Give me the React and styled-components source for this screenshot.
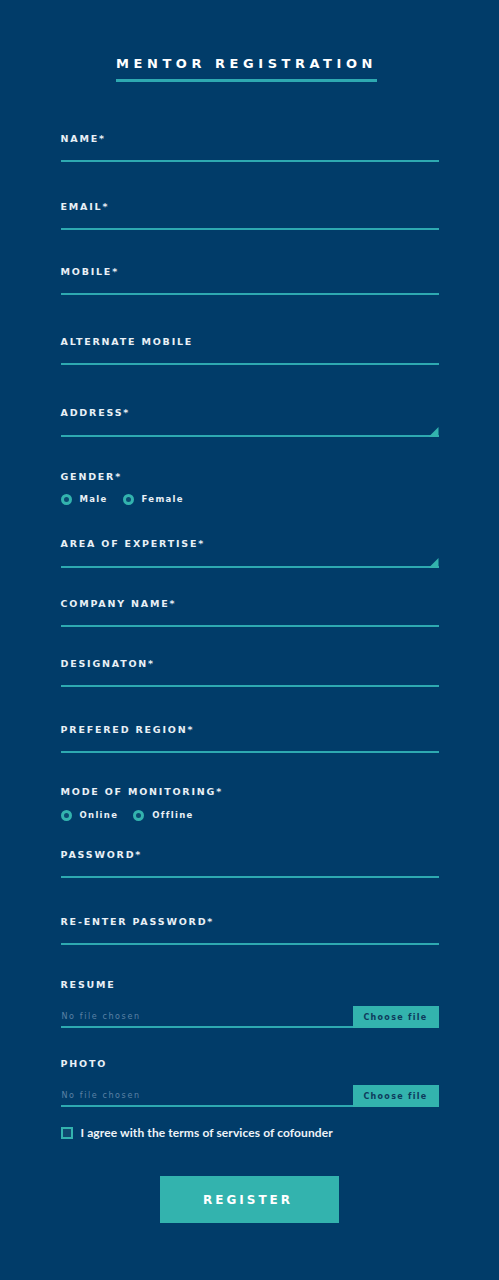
import React from "react";
import styled, { createGlobalStyle } from "styled-components";

const NAVY = "#013c69";
const TEAL = "#33b3ae";
const LINE = "#2ea9b1";

const GlobalStyle = createGlobalStyle`
  html, body {
    margin: 0;
    padding: 0;
    background: ${NAVY};
  }
  * {
    box-sizing: border-box;
  }
`;

// spacing above each block, taken from the layout
const fields = [
  { label: "NAME*", kind: "text", space: 0 },
  { label: "EMAIL*", kind: "text", space: 39 },
  { label: "MOBILE*", kind: "text", space: 36 },
  { label: "ALTERNATE MOBILE", kind: "text", space: 41 },
  { label: "ADDRESS*", kind: "area", space: 42 },
  { label: "GENDER*", kind: "radio", options: ["Male", "Female"], space: 34 },
  { label: "AREA OF EXPERTISE*", kind: "area", space: 33 },
  { label: "COMPANY NAME*", kind: "text", space: 30 },
  { label: "DESIGNATON*", kind: "text", space: 31 },
  { label: "PREFERED REGION*", kind: "text", space: 37 },
  { label: "MODE OF MONITORING*", kind: "radio", options: ["Online", "Offline"], space: 33 },
  { label: "PASSWORD*", kind: "text", space: 28 },
  { label: "RE-ENTER PASSWORD*", kind: "text", space: 38 },
  { label: "RESUME", kind: "file", space: 34 },
  { label: "PHOTO", kind: "file", space: 30 },
];

function App() {
  return (
    <Page>
      <GlobalStyle />
      <Header>
        <Title>MENTOR REGISTRATION</Title>
      </Header>
      <Form onSubmit={(e) => e.preventDefault()}>
        {fields.map((f) => (
          <Field key={f.label} $space={f.space}>
            <Label>{f.label}</Label>
            {f.kind === "text" && <TextInput type="text" />}
            {f.kind === "area" && (
              <AreaWrap>
                <TextArea rows="1" />
              </AreaWrap>
            )}
            {f.kind === "radio" && (
              <RadioRow $lift={f.label === "GENDER*" ? 10 : 11}>
                {f.options.map((o) => (
                  <RadioOption key={o}>
                    <RadioDot />
                    {o}
                  </RadioOption>
                ))}
              </RadioRow>
            )}
            {f.kind === "file" && (
              <FileRow>
                <FileName>No file chosen</FileName>
                <FileButton>Choose file</FileButton>
              </FileRow>
            )}
          </Field>
        ))}
        <Agree>
          <CheckBox />
          I agree with the terms of services of cofounder
        </Agree>
        <Actions>
          <RegisterButton type="submit">REGISTER</RegisterButton>
        </Actions>
      </Form>
    </Page>
  );
}

export default App;

const Page = styled.div`
  width: 499px;
  min-height: 1280px;
  background: ${NAVY};
  padding-top: 56px;
  font-family: "DejaVu Sans", sans-serif;
`;

const Header = styled.div`
  display: flex;
  justify-content: center;
`;

const Title = styled.h1`
  margin: 0 6px 0 0;
  padding: 0 0 7px 0;
  font-size: 13px;
  line-height: 16px;
  font-weight: 700;
  letter-spacing: 4.55px;
  color: #ffffff;
  border-bottom: 3px solid ${LINE};
`;

const Form = styled.form`
  width: 378px;
  margin: 51px auto 0;
`;

const Field = styled.div`
  margin-top: ${(p) => p.$space}px;
  display: flex;
  flex-direction: column;
`;

const Label = styled.label`
  font-size: 9.5px;
  line-height: 12px;
  font-weight: 700;
  letter-spacing: 1.8px;
  color: #e9f0f6;
`;

const TextInput = styled.input`
  height: 17px;
  width: 100%;
  padding: 0;
  background: transparent;
  border: none;
  border-bottom: 2px solid ${LINE};
  color: #fff;
  &:focus {
    outline: none;
  }
`;

const AreaWrap = styled.div`
  position: relative;
  display: flex;
  &::after {
    content: "";
    position: absolute;
    right: 0;
    bottom: 0;
    width: 10px;
    height: 10px;
    background: ${TEAL};
    clip-path: polygon(100% 0, 100% 100%, 0 100%);
  }
`;

const TextArea = styled.textarea`
  height: 18px;
  width: 100%;
  padding: 0;
  resize: none;
  background: transparent;
  border: none;
  border-bottom: 2px solid ${LINE};
  color: #fff;
  &:focus {
    outline: none;
  }
`;

const RadioRow = styled.div`
  display: flex;
  gap: 15px;
  margin-top: ${(p) => p.$lift}px;
  height: 12px;
  align-items: center;
`;

const RadioOption = styled.span`
  display: flex;
  align-items: center;
  gap: 8px;
  font-size: 8.5px;
  font-weight: 700;
  letter-spacing: 1.3px;
  color: #e9f0f6;
`;

const RadioDot = styled.span`
  width: 11px;
  height: 11px;
  border-radius: 50%;
  border: 3px solid ${TEAL};
  background: #0b4a72;
`;

const FileRow = styled.div`
  display: flex;
  align-items: stretch;
  height: 22px;
  margin-top: 15px;
`;

const FileName = styled.span`
  flex: 1;
  display: flex;
  align-items: center;
  padding-left: 1px;
  font-size: 8px;
  letter-spacing: 1.6px;
  color: #5b82a5;
  border-bottom: 2px solid ${LINE};
`;

const FileButton = styled.span`
  width: 86px;
  display: flex;
  align-items: center;
  justify-content: center;
  background: ${TEAL};
  color: #0e3a5c;
  font-size: 8px;
  font-weight: 700;
  letter-spacing: 1.3px;
`;

const Agree = styled.label`
  display: flex;
  align-items: center;
  gap: 8px;
  margin-top: 18px;
  font-family: Lato, sans-serif;
  font-size: 12px;
  font-weight: 700;
  letter-spacing: 0.1px;
  color: #eef3f8;
`;

const CheckBox = styled.span`
  width: 12px;
  height: 12px;
  border: 2px solid ${TEAL};
  background: #0f4a70;
`;

const Actions = styled.div`
  display: flex;
  justify-content: center;
  margin-top: 36px;
`;

const RegisterButton = styled.button`
  width: 179px;
  height: 47px;
  border: none;
  border-radius: 0;
  background: ${TEAL};
  color: #ffffff;
  font-family: "DejaVu Sans", sans-serif;
  font-size: 12px;
  font-weight: 700;
  letter-spacing: 3px;
  padding-left: 3px;
  cursor: pointer;
`;
